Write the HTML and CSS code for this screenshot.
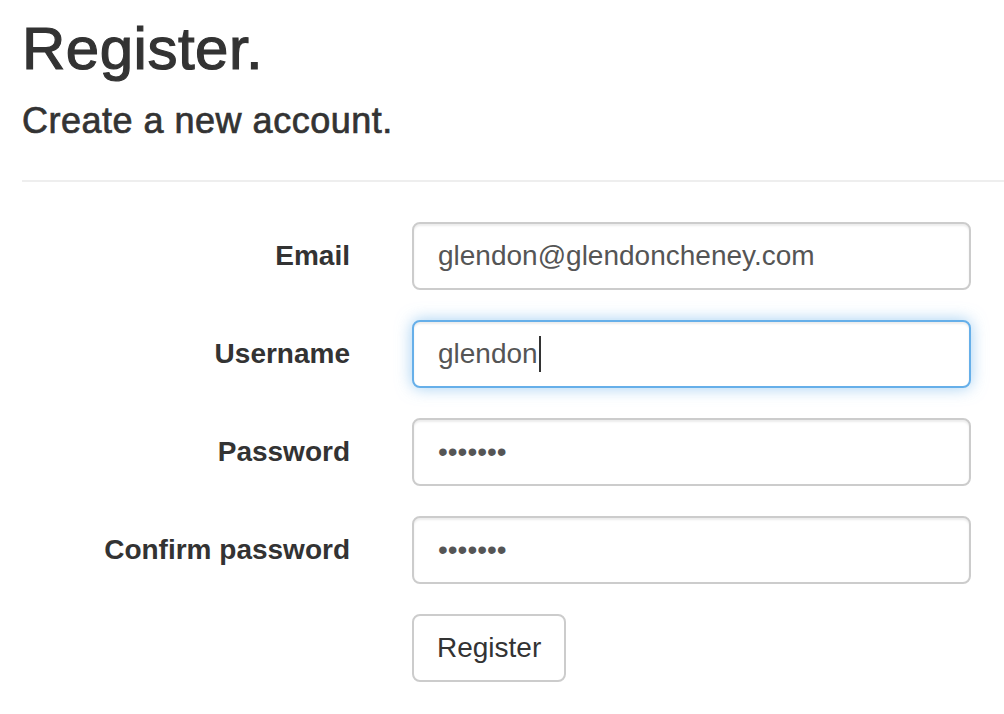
FILE: index.html
```html
<!DOCTYPE html>
<html>
<head>
<meta charset="utf-8">
<link rel="stylesheet" href="styles.css">
</head>
<body>
<div class="page">
  <h2 class="title">Register.</h2>
  <h4 class="subtitle">Create a new account.</h4>
  <hr class="rule">
  <form class="form">
    <div class="row">
      <label class="label">Email</label>
      <div class="control"><input class="input" type="text" value="glendon@glendoncheney.com"></div>
    </div>
    <div class="row">
      <label class="label">Username</label>
      <div class="control"><input class="input focus" type="text" value="glendon"><span class="caret"></span></div>
    </div>
    <div class="row">
      <label class="label">Password</label>
      <div class="control"><input class="input" type="password" value="1234567"></div>
    </div>
    <div class="row">
      <label class="label">Confirm password</label>
      <div class="control"><input class="input" type="password" value="1234567"></div>
    </div>
    <div class="row">
      <div class="label"></div>
      <div class="control"><button class="btn" type="button">Register</button></div>
    </div>
  </form>
</div>
</body>
</html>
```

FILE: styles.css
```css
html, body {
  margin: 0;
  padding: 0;
  background: #fff;
}
body {
  font-family: "Liberation Sans", Arial, Helvetica, sans-serif;
  color: #333;
}
.page {
  padding: 0 33px 0 22px;
}
.title {
  margin: 16px 0 0;
  font-size: 60px;
  line-height: 66px;
  font-weight: 500;
  letter-spacing: 0.5px;
  -webkit-text-stroke: 1.2px #333;
}
.subtitle {
  margin: 19px 0 0;
  font-size: 36px;
  line-height: 40px;
  font-weight: 500;
  letter-spacing: 0.5px;
  -webkit-text-stroke: 0.7px #333;
}
.rule {
  margin: 39px -33px 0 0;
  border: 0;
  border-top: 2px solid #eee;
  height: 0;
}
.form {
  margin-top: 40px;
}
.row {
  display: flex;
  align-items: center;
  margin-bottom: 30px;
  height: 68px;
}
.label {
  width: 328px;
  flex: none;
  text-align: right;
  font-weight: 700;
  font-size: 28px;
  margin-right: 62px;
}
.control {
  flex: 1;
  position: relative;
}
.input {
  display: block;
  box-sizing: border-box;
  width: 100%;
  height: 68px;
  padding: 0 24px;
  font-family: inherit;
  font-size: 28px;
  color: #555;
  background: #fff;
  border: 2px solid #ccc;
  border-radius: 8px;
  box-shadow: inset 0 2px 2px rgba(0,0,0,.075);
  outline: none;
}
.input.focus {
  border-color: #66afe9;
  box-shadow: inset 0 2px 2px rgba(0,0,0,.075), 0 0 16px rgba(102,175,233,.6);
}
.caret {
  position: absolute;
  left: 127px;
  top: 16px;
  width: 2px;
  height: 36px;
  background: #333;
}
.btn {
  box-sizing: border-box;
  height: 68px;
  padding: 0 23px;
  font-family: inherit;
  font-size: 28px;
  color: #333;
  background: #fff;
  border: 2px solid #ccc;
  border-radius: 8px;
}
```
